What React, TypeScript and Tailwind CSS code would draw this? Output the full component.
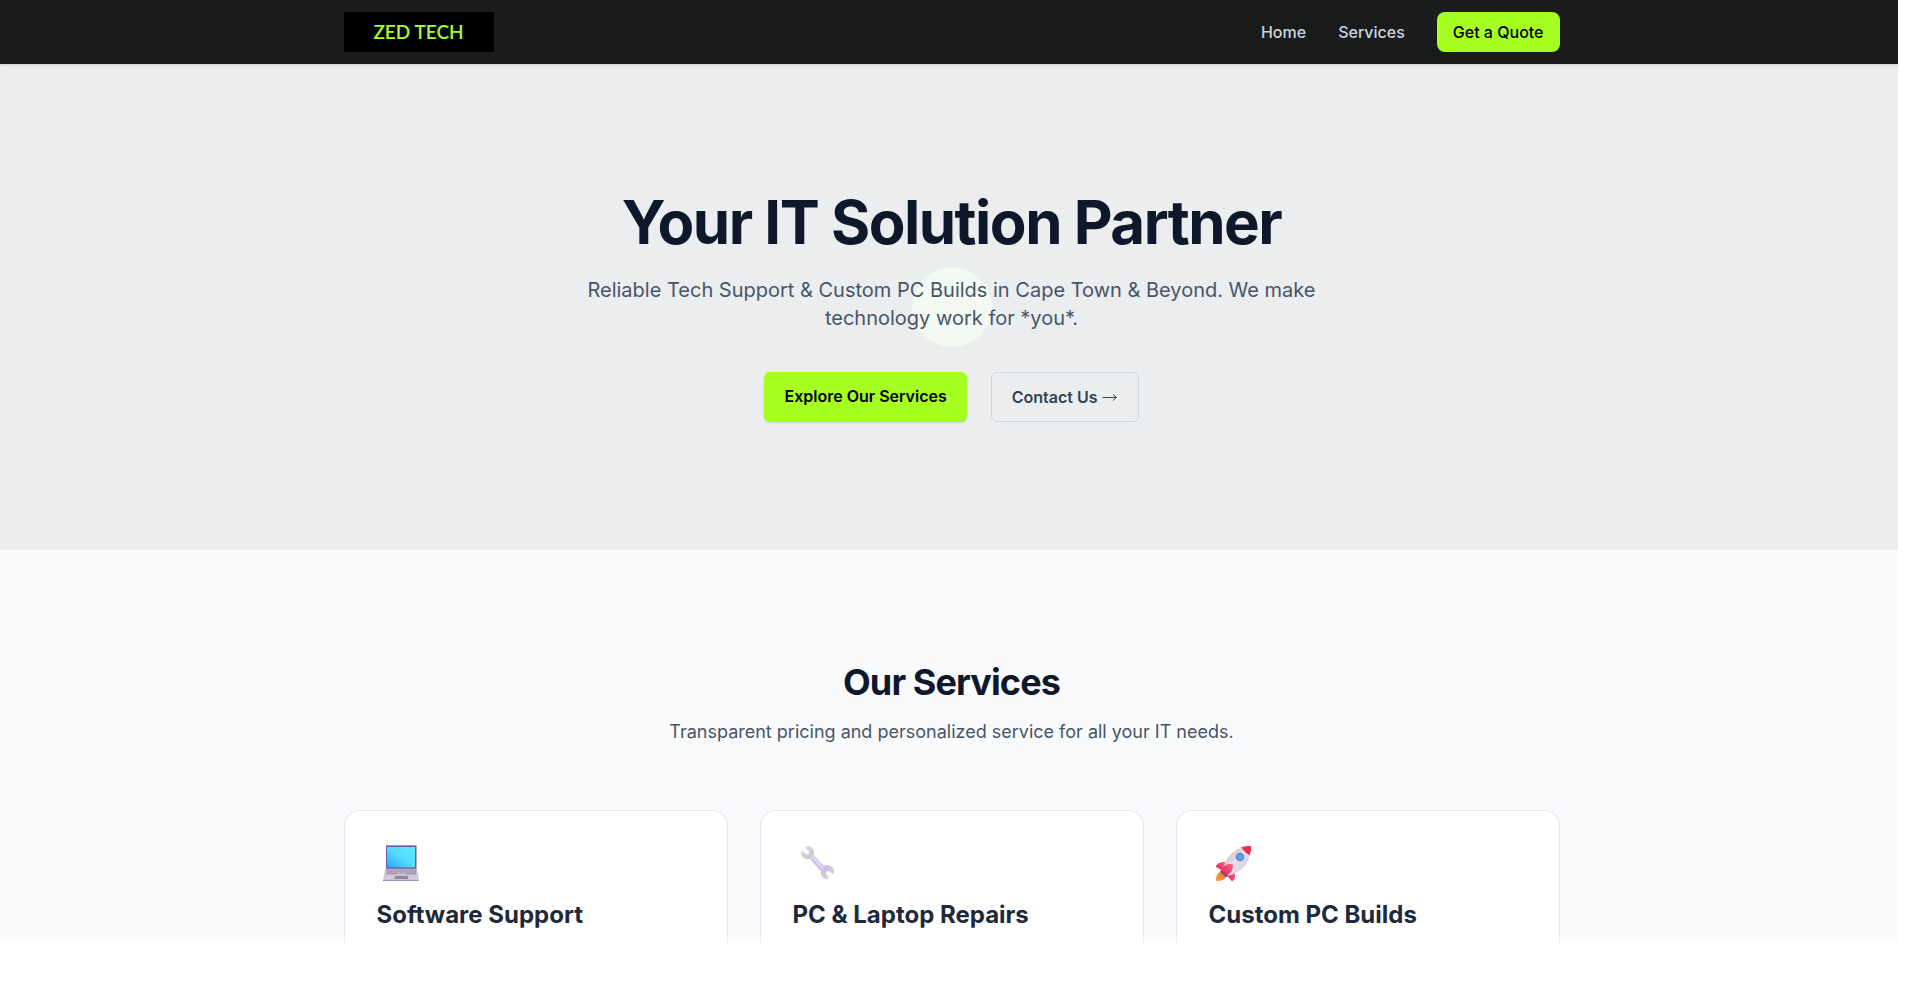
const NAV_LINKS = [
  { label: "Home", href: "#home" },
  { label: "Services", href: "#services" },
];

function LaptopIcon() {
  return (
    <svg viewBox="21 39 144 120" className="h-10 w-12" aria-hidden="true">
      <defs>
        <linearGradient id="laptop-screen" x1="0" y1="1" x2="1" y2="0">
          <stop offset="0" stopColor="#2aa4ff" />
          <stop offset="0.5" stopColor="#54dcff" />
          <stop offset="1" stopColor="#5ceaff" />
        </linearGradient>
        <linearGradient id="laptop-base" x1="0" y1="0" x2="0" y2="1">
          <stop offset="0" stopColor="#bdb4c8" />
          <stop offset="1" stopColor="#d8d0e0" />
        </linearGradient>
      </defs>
      <rect x="48" y="45" width="93" height="73" rx="3" fill="#b5a6cf" />
      <rect x="48" y="47" width="90" height="70" rx="2" fill="#6f5aa8" />
      <rect x="51" y="51" width="84" height="61" fill="url(#laptop-screen)" />
      <path d="M46 116H141L147 150H39Z" fill="url(#laptop-base)" />
      <rect x="50" y="119" width="88" height="14" rx="1" fill="#9d92ac" />
      <path d="M52 123H136" stroke="#d4cbdd" strokeWidth="3" strokeDasharray="4 3" />
      <path d="M53 128H136" stroke="#d4cbdd" strokeWidth="3" strokeDasharray="3 4" />
      <rect x="80" y="130" width="26" height="3" fill="#d4cbdd" />
      <path d="M75 138H113L115 147H73Z" fill="#9289a0" />
      <path d="M39 149H147V153H39Z" fill="#a293b2" />
    </svg>
  );
}

function WrenchIcon() {
  return (
    <svg viewBox="21 39 144 120" className="h-10 w-12" aria-hidden="true">
      <defs>
        <linearGradient
          id="wrench-metal"
          gradientUnits="userSpaceOnUse"
          x1="48"
          y1="48"
          x2="140"
          y2="148"
        >
          <stop offset="0" stopColor="#dcdadf" />
          <stop offset="0.25" stopColor="#d0cbd8" />
          <stop offset="0.5" stopColor="#dacdf0" />
          <stop offset="0.7" stopColor="#cdbfe4" />
          <stop offset="1" stopColor="#d8d4df" />
        </linearGradient>
      </defs>
      <path
        d="M65 48C78 48 87 60 84 75L113 107C126 104 141 108 144 122C145 128 143 131 140 132L130 124C125 122 119 127 120 132L129 141C129 145 125 147 121 147C109 145 103 134 105 122L75 87C60 91 46 82 45 70C45 66 47 63 50 63L58 71C63 76 70 71 69 65L59 54C58 51 61 48 65 48Z"
        fill="url(#wrench-metal)"
      />
      <path d="M81 82L109 113" stroke="#e3d8f7" strokeWidth="6" strokeLinecap="round" />
      <path d="M77 88L103 118" stroke="#cdbfe6" strokeWidth="5" strokeLinecap="round" />
    </svg>
  );
}

function RocketIcon() {
  return (
    <svg viewBox="27 39 144 120" className="h-10 w-12" aria-hidden="true">
      <defs>
        <linearGradient id="rocket-body" x1="0" y1="0" x2="1" y2="1">
          <stop offset="0" stopColor="#bdb6c2" />
          <stop offset="0.5" stopColor="#e6dfeb" />
          <stop offset="1" stopColor="#cfc2da" />
        </linearGradient>
        <linearGradient id="rocket-fin" x1="1" y1="0" x2="0" y2="1">
          <stop offset="0" stopColor="#ff6a83" />
          <stop offset="1" stopColor="#e5195f" />
        </linearGradient>
        <linearGradient id="rocket-flame" x1="1" y1="0" x2="0" y2="1">
          <stop offset="0" stopColor="#f06a3c" />
          <stop offset="1" stopColor="#ffa23c" />
        </linearGradient>
      </defs>
      <path d="M62 123L80 137C76 148 66 153 49 153C44 147 52 129 62 123Z" fill="url(#rocket-flame)" />
      <path d="M81 97C64 94 51 100 47 110L64 120Z" fill="url(#rocket-fin)" />
      <path d="M103 126C108 138 105 149 96 154L82 138Z" fill="url(#rocket-fin)" />
      <path
        d="M68 126C69 99 87 67 126 51L150 72C145 110 113 132 80 138Z"
        fill="url(#rocket-body)"
      />
      <path d="M124 52C134 48 144 47 152 48C155 55 153 66 149 76C139 71 130 62 124 52Z" fill="#e9304f" />
      <path d="M63 120L85 138L78 141L61 125Z" fill="#51498c" />
      <path d="M63 121C67 108 82 99 98 103C102 115 94 129 82 136C76 133 68 128 63 121Z" fill="url(#rocket-fin)" />
      <circle cx="120" cy="81" r="13" fill="#7f7c9c" />
      <circle cx="120" cy="81" r="9" fill="#46a5f5" />
    </svg>
  );
}

function ArrowIcon() {
  return (
    <svg viewBox="0 0 16 10" className="h-2.5 w-4" aria-hidden="true">
      <path d="M0.5 5.5H14" stroke="currentColor" strokeWidth="1" />
      <path d="M11 2.5L14.5 5.5L11 8.5" fill="none" stroke="currentColor" strokeWidth="1" />
    </svg>
  );
}

const SERVICES = [
  { title: "Software Support", Icon: LaptopIcon },
  { title: "PC & Laptop Repairs", Icon: WrenchIcon },
  { title: "Custom PC Builds", Icon: RocketIcon },
];

function Header() {
  return (
    <header className="relative z-10 bg-[#1a1c1b] shadow-sm">
      <div className="mx-auto flex h-16 max-w-7xl items-center justify-between px-8">
        <a
          href="#home"
          className="flex h-10 w-[150px] items-center justify-center bg-black font-['Lato',sans-serif] text-[19px] leading-6 font-semibold text-[#a6ff20]"
        >
          ZED TECH
        </a>
        <nav className="flex items-center gap-8 font-medium">
          {NAV_LINKS.map((link) => (
            <a key={link.href} href={link.href} className="text-[#cbd5e1] hover:text-white">
              {link.label}
            </a>
          ))}
          <a href="#quote" className="rounded-lg bg-[#a6ff20] px-4 py-2 text-black">
            Get a Quote
          </a>
        </nav>
      </div>
    </header>
  );
}

function Hero() {
  return (
    <section id="home" className="relative bg-[#ebedef] px-8 py-32 text-center">
      <div className="absolute inset-0 flex items-center justify-center">
        <div className="size-20 rounded-full bg-[#f2faf1]" />
      </div>
      <div className="relative mx-auto max-w-3xl">
        <h1 className="text-6xl font-bold tracking-tight text-[#0f172a]">
          Your IT Solution Partner
        </h1>
        <p className="mt-6 text-xl text-[#475569]">
          Reliable Tech Support &amp; Custom PC Builds in Cape Town &amp; Beyond. We make
          technology work for *you*.
        </p>
        <div className="mt-10 flex justify-center gap-6 font-semibold">
          <a href="#services" className="rounded-md bg-[#a6ff20] px-5 py-3 text-black shadow-sm">
            Explore Our Services
          </a>
          <a
            href="#contact"
            className="flex items-center gap-1 rounded-md border border-[#cbd5e1] px-5 py-3 text-[#334155]"
          >
            Contact Us
            <ArrowIcon />
          </a>
        </div>
      </div>
    </section>
  );
}

function Services() {
  return (
    <section id="services" className="overflow-hidden bg-[#f8fafc] pt-28">
      <div className="mx-auto max-w-7xl px-8">
        <div className="text-center">
          <h2 className="text-4xl font-bold tracking-tight text-[#0f172a]">Our Services</h2>
          <p className="mt-4 text-lg text-[#475569]">
            Transparent pricing and personalized service for all your IT needs.
          </p>
        </div>
        <div className="mt-16 grid grid-cols-3 gap-8">
          {SERVICES.map(({ title, Icon }) => (
            <article
              key={title}
              className="rounded-t-2xl border border-b-0 border-[#e2e8f0] bg-white px-8 pt-8 pb-3 shadow-xs"
            >
              <Icon />
              <h3 className="mt-4 text-2xl font-bold text-[#1e293b]">{title}</h3>
            </article>
          ))}
        </div>
      </div>
    </section>
  );
}

export default function App() {
  return (
    <div className="min-h-screen bg-white pr-4 font-['Inter',sans-serif] antialiased">
      <div className="overflow-hidden">
        <div className="-mr-[5px]">
          <Header />
          <Hero />
          <Services />
        </div>
      </div>
    </div>
  );
}
